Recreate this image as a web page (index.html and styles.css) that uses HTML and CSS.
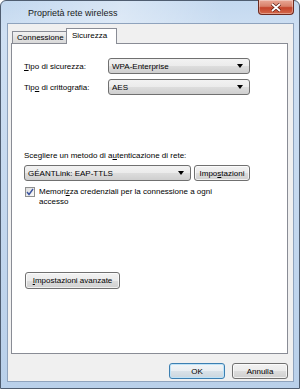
FILE: index.html
```html
<!DOCTYPE html>
<html lang="it">
<head>
  <meta charset="UTF-8">
  <title>Proprietà rete wireless</title>
  <link rel="stylesheet" href="styles.css">
</head>
<body>
  <div class="window">
    <header class="titlebar">
      <span class="title">Proprietà rete wireless</span>
      <span class="close">
        <svg width="12" height="9" viewBox="0 0 12 9"><path d="M2 1 L10 8 M10 1 L2 8" stroke="#5a1a10" stroke-width="3.2"/><path d="M2 1 L10 8 M10 1 L2 8" stroke="#ffffff" stroke-width="1.8"/></svg>
      </span>
    </header>

    <div class="client">
      <nav class="tabs">
        <span class="tab">Connessione</span>
        <span class="tab active">Sicurezza</span>
      </nav>

      <section class="panel">
        <div class="field-row first">
          <label class="field-label"><u>T</u>ipo di sicurezza:</label>
          <div class="combo wide"><span>WPA-Enterprise</span><i class="arrow"></i></div>
        </div>
        <div class="field-row">
          <label class="field-label">Tip<u>o</u> di crittografia:</label>
          <div class="combo wide"><span>AES</span><i class="arrow"></i></div>
        </div>

        <p class="method-label">Scegliere un metodo di a<u>u</u>tenticazione di rete:</p>
        <div class="method-row">
          <div class="combo method"><span>GÉANTLink: EAP-TTLS</span><i class="arrow"></i></div>
          <button class="btn settings">Impo<u>s</u>tazioni</button>
        </div>

        <div class="check-row">
          <span class="checkbox">
            <svg width="8" height="8" viewBox="0 0 8 8"><path d="M1 4 L3 6.5 L7 1" fill="none" stroke="#3b54a0" stroke-width="1.4"/></svg>
          </span>
          <p class="check-text">Memori<u>z</u>za credenziali per la connessione a ogni accesso</p>
        </div>

        <button class="btn advanced"><u>I</u>mpostazioni avanzate</button>
      </section>

      <footer class="buttons">
        <button class="btn dialog default">OK</button>
        <button class="btn dialog">Annulla</button>
      </footer>
    </div>
  </div>
</body>
</html>
```

FILE: styles.css
```css
* {
  box-sizing: border-box;
  margin: 0;
  padding: 0;
}

html, body {
  width: 300px;
  height: 389px;
  overflow: hidden;
  font-family: "Liberation Sans", Arial, sans-serif;
  font-size: 8px;
  color: #000000;
}

.window {
  width: 300px;
  height: 389px;
  border: 1px solid #4f5d70;
  border-radius: 6px 6px 0 0;
  background: linear-gradient(180deg, #c3d8ef 0%, #cfe0f3 8%, #b9d0ea 100%);
  display: flex;
  flex-direction: column;
  padding: 0 5px 6px 6px;
}

/* Title bar */
.titlebar {
  height: 22px;
  display: flex;
  justify-content: space-between;
  align-items: flex-start;
  background: linear-gradient(100deg, rgba(255,255,255,0) 0%, rgba(255,255,255,0.35) 40%, rgba(255,255,255,0) 75%);
}

.title {
  font-size: 9px;
  color: #1a1a1a;
  margin: 7px 0 0 21px;
}

.close {
  width: 36px;
  height: 15px;
  margin-top: -1px;
  border: 1px solid #6e2a1f;
  border-top: none;
  border-radius: 0 0 4px 4px;
  background: linear-gradient(180deg, #e9a897 0%, #d8806a 45%, #c4432b 55%, #d46a4c 100%);
  display: flex;
  align-items: center;
  justify-content: center;
  box-shadow: inset 0 0 0 1px rgba(255,255,255,0.35);
}

/* Client area */
.client {
  flex: 1;
  background: #f0f0f0;
  border: 1px solid #8fa3bd;
  padding: 4px 5px 0 3px;
  display: flex;
  flex-direction: column;
}

.tabs {
  display: flex;
  align-items: flex-end;
  height: 15px;
  margin-left: 1px;
}

.tab {
  height: 12px;
  width: 55px;
  border: 1px solid #898c95;
  border-bottom: none;
  background: linear-gradient(180deg, #f2f2f2 0%, #e4e4e4 50%, #d9d9d9 100%);
  line-height: 11px;
  padding-left: 4px;
}

.tab.active {
  height: 16px;
  width: 51px;
  margin-bottom: -1px;
  margin-left: -1px;
  background: #ffffff;
  position: relative;
  z-index: 1;
  line-height: 13px;
  padding-left: 5px;
}

.panel {
  height: 311px;
  background: #ffffff;
  border: 1px solid #898c95;
  padding: 0 0 0 12px;
  display: flex;
  flex-direction: column;
}

.field-row {
  display: flex;
  align-items: center;
  height: 16px;
  margin-top: 5px;
}

.field-row.first {
  margin-top: 14px;
}

.field-label {
  width: 84px;
}

/* Combo boxes */
.combo {
  height: 16px;
  border: 1px solid #707070;
  border-radius: 3px;
  background: linear-gradient(180deg, #f2f2f2 0%, #ebebeb 50%, #dddddd 51%, #cfcfcf 100%);
  display: flex;
  align-items: center;
  justify-content: space-between;
  padding: 0 6px 0 3px;
}

.combo.wide {
  width: 142px;
}

.combo.method {
  width: 167px;
}

.arrow {
  width: 0;
  height: 0;
  border-left: 3.5px solid transparent;
  border-right: 3.5px solid transparent;
  border-top: 4px solid #000000;
}

.method-label {
  margin-top: 56px;
  line-height: 10px;
}

.method-row {
  display: flex;
  gap: 3px;
  margin-top: 4px;
}

/* Buttons */
.btn {
  font-family: "Liberation Sans", Arial, sans-serif;
  font-size: 8px;
  color: #000000;
  border: 1px solid #707070;
  border-radius: 3px;
  background: linear-gradient(180deg, #f2f2f2 0%, #ebebeb 50%, #dddddd 51%, #cfcfcf 100%);
  box-shadow: inset 0 0 0 1px rgba(255,255,255,0.7);
  display: flex;
  align-items: center;
  justify-content: center;
}

.btn.settings {
  width: 56px;
  height: 16px;
}

.check-row {
  display: flex;
  align-items: flex-start;
  gap: 4px;
  margin-top: 6px;
  margin-left: 1px;
}

.checkbox {
  width: 10px;
  height: 10px;
  flex-shrink: 0;
  border: 1px solid #8e8f8f;
  background: linear-gradient(135deg, #dcdcdc 0%, #fbfbfb 100%);
  display: flex;
  align-items: center;
  justify-content: center;
}

.check-text {
  width: 200px;
  line-height: 10px;
}

.btn.advanced {
  width: 95px;
  height: 17px;
  margin-top: 65px;
  margin-left: 1px;
}

.buttons {
  display: flex;
  justify-content: flex-end;
  gap: 7px;
  margin-top: 9px;
}

.btn.dialog {
  width: 56px;
  height: 16px;
}

.btn.default {
  border-color: #3c7fb1;
  box-shadow: inset 0 0 0 1px #bfe3f8;
  background: linear-gradient(180deg, #f2f5f7 0%, #e9eef2 50%, #d9e2e9 51%, #cbd6de 100%);
}
```
